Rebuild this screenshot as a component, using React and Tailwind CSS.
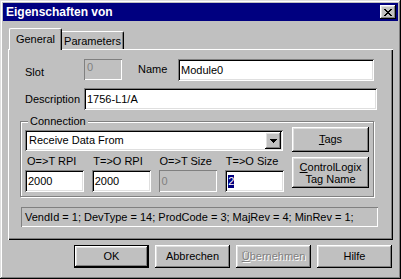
import React from "react";

const raised =
  "shadow-[inset_-1px_-1px_0_#000,inset_1px_1px_0_#fff,inset_-2px_-2px_0_#808080,inset_2px_2px_0_#dfdfdf]";
const sunken =
  "shadow-[inset_1px_1px_0_#808080,inset_-1px_-1px_0_#fff,inset_2px_2px_0_#000,inset_-2px_-2px_0_#dfdfdf]";
const staticBox = "shadow-[inset_1px_1px_0_#808080,inset_-1px_-1px_0_#fff]";

function CloseGlyph() {
  // classic 8x7 pixel X
  const rows = ["11000011", "01100110", "00111100", "00011000", "00111100", "01100110", "11000011"];
  return (
    <svg width="8" height="7" viewBox="0 0 8 7" shapeRendering="crispEdges">
      {rows.map((r, y) =>
        r.split("").map((c, x) =>
          c === "1" ? <rect key={`${x}-${y}`} x={x} y={y} width="1" height="1" fill="#000" /> : null
        )
      )}
    </svg>
  );
}

function DownArrow() {
  return (
    <svg width="7" height="4" viewBox="0 0 7 4" shapeRendering="crispEdges">
      <rect x="0" y="0" width="7" height="1" fill="#000" />
      <rect x="1" y="1" width="5" height="1" fill="#000" />
      <rect x="2" y="2" width="3" height="1" fill="#000" />
      <rect x="3" y="3" width="1" height="1" fill="#000" />
    </svg>
  );
}

function Edit({ value, width, selected }) {
  return (
    <div className={`h-[22px] ${width} bg-white ${sunken} flex items-center pl-[3px]`}>
      {selected ? <span className="bg-[#000080] text-white">{value}</span> : value}
    </div>
  );
}

function Button({ children, def, disabled }) {
  return (
    <div
      className={`h-[23px] w-[75px] flex items-center justify-center ${raised} ${
        def ? "border border-black" : ""
      } ${disabled ? "text-[#808080] [text-shadow:1px_1px_0_#fff]" : ""}`}
    >
      {children}
    </div>
  );
}

export default function App() {
  return (
    <div className="w-[401px] h-[279px] bg-[#c0c0c0] p-[3px] text-[11px] leading-[13px] text-black font-['Liberation_Sans',Arial,sans-serif] shadow-[inset_-1px_-1px_0_#000,inset_1px_1px_0_#dfdfdf,inset_-2px_-2px_0_#808080,inset_2px_2px_0_#fff]">
      {/* title bar */}
      <div className="h-[18px] bg-[#000080] flex items-center justify-between pl-[3px] pr-[2px]">
        <span className="text-white font-bold text-[12px]">Eigenschaften von</span>
        <div className={`w-[16px] h-[14px] bg-[#c0c0c0] ${raised} flex items-center justify-center`}>
          <CloseGlyph />
        </div>
      </div>

      <div className="px-[5px] pt-[7px]">
        {/* tabs */}
        <div className="flex items-end h-[21px] pl-[1px]">
          <div className="relative z-10 -mb-px h-[22px] w-[53px] bg-[#c0c0c0] border-l border-t border-white border-r border-r-black rounded-tl-[2px] rounded-tr-[2px] shadow-[inset_-1px_0_0_#808080] flex items-start justify-center pt-[4px]">
            General
          </div>
          <div className="h-[18px] w-[62px] border-t border-white border-r border-r-black rounded-tr-[2px] shadow-[inset_-1px_0_0_#808080] flex items-start justify-center pt-[3px]">
            Parameters
          </div>
        </div>

        {/* panel */}
        <div className="h-[191px] pl-[12px] pt-[10px] shadow-[inset_1px_1px_0_#fff,inset_-1px_-1px_0_#000,inset_-2px_-2px_0_#808080]">
          <div className="flex items-start h-[21px]">
            <span className="ml-[5px] w-[59px] mt-[7px]">Slot</span>
            <div className={`w-[38px] h-[21px] ${staticBox} text-[#808080] pl-[3px] pt-[2px]`}>0</div>
            <span className="ml-[16px] w-[40px] mt-[4px]">Name</span>
            <Edit value="Module0" width="w-[196px]" />
          </div>

          <div className="flex items-center h-[22px] mt-[8px]">
            <span className="ml-[5px] w-[59px]">Description</span>
            <Edit value="1756-L1/A" width="w-[293px]" />
          </div>

          {/* connection group */}
          <div className="relative mt-[11px] w-[354px] h-[76px] border border-[#808080] shadow-[inset_1px_1px_0_#fff,1px_1px_0_#fff] pl-[4px] pt-[5px] flex">
            <span className="absolute -top-[7px] left-[7px] bg-[#c0c0c0] px-[2px]">Connection</span>
            <div className="mt-[3px] w-[259px]">
              <div className={`h-[21px] w-[258px] bg-white ${sunken} flex items-center justify-between pl-[4px] pr-[2px]`}>
                <span>Receive Data From</span>
                <div className={`w-[16px] h-[17px] bg-[#c0c0c0] ${raised} flex items-center justify-center`}>
                  <DownArrow />
                </div>
              </div>
              <div className="flex gap-[8px] mt-[4px] h-[13px] pl-[2px]">
                <span className="w-[59px]">O=&gt;T RPI</span>
                <span className="w-[59px]">T=&gt;O RPI</span>
                <span className="w-[59px]">O=&gt;T Size</span>
                <span className="w-[59px]">T=&gt;O Size</span>
              </div>
              <div className="flex gap-[8px] mt-[2px]">
                <Edit value="2000" width="w-[59px]" />
                <Edit value="2000" width="w-[59px]" />
                <div className={`h-[22px] w-[59px] ${staticBox} text-[#808080] flex items-center pl-[3px]`}>0</div>
                <Edit value="2" width="w-[59px]" selected />
              </div>
            </div>
            <div className="ml-[8px] flex flex-col gap-[5px]">
              <div className={`w-[77px] h-[25px] ${raised} flex items-center justify-center`}>
                <span>
                  <span className="underline">T</span>ags
                </span>
              </div>
              <div className={`w-[77px] h-[31px] ${raised} flex flex-col items-center justify-center leading-[12px]`}>
                <span>
                  <span className="underline">C</span>ontrolLogix
                </span>
                <span>Tag Name</span>
              </div>
            </div>
          </div>

          <div className={`mt-[10px] ml-[1px] w-[357px] h-[20px] ${staticBox} flex items-center pl-[4px]`}>
            VendId = 1; DevType = 14; ProdCode = 3; MajRev = 4; MinRev = 1;
          </div>
        </div>

        {/* buttons */}
        <div className="flex justify-end gap-[6px] mt-[5px] pr-[1px]">
          <Button def>OK</Button>
          <Button>Abbrechen</Button>
          <Button disabled>
            <span>
              <span className="underline">Ü</span>bernehmen
            </span>
          </Button>
          <Button>Hilfe</Button>
        </div>
      </div>
    </div>
  );
}
